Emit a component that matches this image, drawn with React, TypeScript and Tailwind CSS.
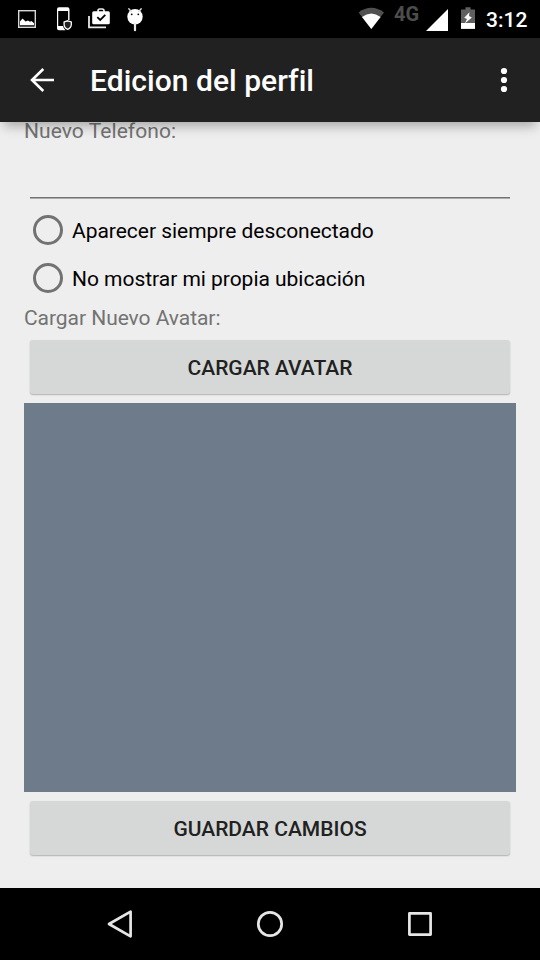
import React from "react";

function StatusBar() {
  return (
    <div className="flex h-[38px] shrink-0 items-start justify-between bg-black">
      <svg width="160" height="38" viewBox="0 0 160 38" fill="none">
        {/* picture */}
        <rect x="18.7" y="10.7" width="16.6" height="16.6" stroke="#d8d8d8" strokeWidth="1.4" />
        <path d="M20 25.3V21.5L22.5 18.6L25.6 21.6L28 20.4L30 21.8L31.5 21L34 23.3V25.3Z" fill="#fff" />
        {/* phone with shield */}
        <path fillRule="evenodd" d="M59 7.3H67.5Q69.5 7.3 69.5 9.3V20H68.1V11H58.2V26H63Q63.5 28.5 65.5 30.3H59Q57 30.3 57 28.3V9.3Q57 7.3 59 7.3Z" fill="#fff" />
        <path d="M67.7 20.8L71.3 22V24.5Q71.2 28 67.7 29.4Q64.2 28 64.1 24.5V22Z" fill="#222" stroke="#fff" strokeWidth="1.3" />
        {/* shopping bag */}
        <path d="M89 16V27.4H106" stroke="#e8e8e8" strokeWidth="1.8" />
        <path d="M98 12V10.8Q98 9 99.8 9H102.2Q104 9 104 10.8V12" stroke="#eee" strokeWidth="1.7" />
        <rect x="92.2" y="11.3" width="17.6" height="12.9" rx="1.5" fill="#fff" />
        <path d="M97.3 17.2L100.2 20L105.3 14.9" stroke="#000" strokeWidth="1.8" />
        {/* android head */}
        <circle cx="135" cy="16.8" r="7.7" fill="#fff" />
        <path d="M131.2 11.5L128.8 8.7M138.8 11.5L141.2 8.7" stroke="#ddd" strokeWidth="1.4" strokeLinecap="round" />
        <path d="M135 24V30.2" stroke="#e8e8e8" strokeWidth="2.2" strokeLinecap="round" />
        <circle cx="131.7" cy="14.3" r="0.9" fill="#000" />
        <circle cx="138.3" cy="14.3" r="0.9" fill="#000" />
      </svg>
      <div className="flex items-start pr-3">
        <svg width="36" height="38" viewBox="358 0 36 38">
          <path d="M358.6 12.5Q371.3 3.2 384 12.5L371.3 29Z" fill="#505050" />
          <path d="M362 17Q371.3 10 380.6 17L371.3 29Z" fill="#fff" />
        </svg>
        <span className="w-8 pt-[3px] text-[20px] leading-[23px] font-bold text-[#4d4d4d]">4G</span>
        <svg width="61" height="38" viewBox="426 0 61 38">
          <path d="M426 31L448 9V31Z" fill="#fff" />
          <path d="M461 9.5H465.5V7.3H470.5V9.5H475V23H461Z" fill="#606060" />
          <path d="M461 23H475V28.9H461Z" fill="#fff" />
          <path d="M469.5 12.2L464.2 17.8L467 19L464.8 23.5L471.9 17.4L469 16.1Z" fill="#fff" />
        </svg>
        <span className="-ml-px w-[42px] pt-[8px] text-[21px] leading-[25px] font-medium whitespace-nowrap text-white">3:12</span>
      </div>
    </div>
  );
}

function AppBar() {
  return (
    <header className="relative z-10 flex h-[84px] shrink-0 items-center bg-[#212121] shadow-[0_8px_11px_-4px_rgba(0,0,0,0.3)]">
      <svg className="ml-6" width="36" height="36" viewBox="0 0 36 36" fill="none">
        <path d="M30 18H7.5M19.3 7L8 18L19.3 29" stroke="#fff" strokeWidth="2.6" />
      </svg>
      <h1 className="ml-[30px] flex-1 pt-[2px] text-[30px] leading-[36px] font-medium tracking-[0.03px] text-white">Edicion del perfil</h1>
      <svg className="mr-[18px]" width="36" height="36" viewBox="0 0 36 36" fill="#fff">
        <circle cx="18" cy="9" r="3.1" />
        <circle cx="18" cy="18" r="3.1" />
        <circle cx="18" cy="27" r="3.1" />
      </svg>
    </header>
  );
}

function RadioRow({ label }: { label: string }) {
  return (
    <label className="flex h-12 items-center text-[21px] leading-[25px] tracking-[-0.03px] text-black">
      <span className="mr-[9px] ml-[9px] size-[30px] rounded-full border-[3px] border-[#727272]" />
      <span className="pt-[2px]">{label}</span>
    </label>
  );
}

function RaisedButton({ children }: { children: React.ReactNode }) {
  return (
    <button className="mx-[6px] block h-[54px] w-[480px] shrink-0 rounded-[3px] bg-[#d6d8d7] pt-[2px] text-[21px] leading-[25px] font-medium text-[#212121] shadow-[0_1px_1.5px_rgba(0,0,0,0.26)]">
      {children}
    </button>
  );
}

function NavBar() {
  return (
    <nav className="flex h-[72px] shrink-0 items-center justify-between bg-black px-[102px]">
      <svg width="36" height="36" viewBox="0 0 36 36" fill="none" stroke="#e6e6e6" strokeWidth="2.7" strokeLinejoin="round">
        <path d="M7 18L28.6 5.7V30.3Z" />
      </svg>
      <svg width="36" height="36" viewBox="0 0 36 36" fill="none" stroke="#e6e6e6" strokeWidth="2.7">
        <circle cx="18" cy="18" r="11.7" />
      </svg>
      <svg width="36" height="36" viewBox="0 0 36 36" fill="none" stroke="#e6e6e6" strokeWidth="2.7" strokeLinejoin="round">
        <rect x="7.4" y="7.4" width="21.2" height="21.2" />
      </svg>
    </nav>
  );
}

export default function App() {
  return (
    <div className="flex h-[960px] w-[540px] flex-col overflow-hidden bg-[#eeeeee] font-[Roboto,sans-serif]">
      <StatusBar />
      <AppBar />
      <main className="flex flex-1 flex-col px-6">
        <div className="-mt-[3px] h-[25px] shrink-0 text-[21px] leading-[25px] tracking-[0.06px] text-[#737373]">Nuevo Telefono:</div>
        <div className="mx-[6px] h-[54px] shrink-0 border-b border-[#737373] shadow-[0_1px_0_#aaaaaa]" />
        <div className="mt-2 shrink-0">
          <RadioRow label="Aparecer siempre desconectado" />
          <RadioRow label="No mostrar mi propia ubicación" />
        </div>
        <div className="mt-[4px] h-[25px] shrink-0 text-[21px] leading-[25px] tracking-[-0.05px] text-[#737373]">Cargar Nuevo Avatar:</div>
        <div className="mt-[9px] flex shrink-0 flex-col">
          <RaisedButton>CARGAR AVATAR</RaisedButton>
          <div className="mt-[9px] mb-[9px] h-[389px] bg-[#6e7b8b]" />
          <RaisedButton>GUARDAR CAMBIOS</RaisedButton>
        </div>
      </main>
      <NavBar />
    </div>
  );
}
